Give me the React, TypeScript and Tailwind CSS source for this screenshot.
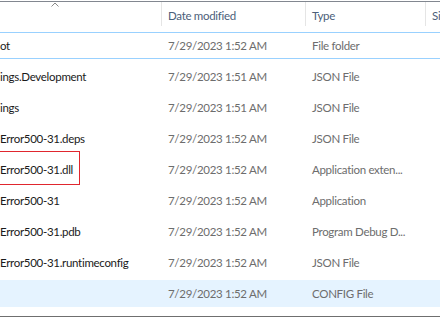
import React from "react";

type Row = { name: string; date: string; type: string; state?: "focus" | "hover" };

const rows: Row[] = [
  { name: "ot", date: "7/29/2023 1:52 AM", type: "File folder", state: "focus" },
  { name: "ings.Development", date: "7/29/2023 1:51 AM", type: "JSON File" },
  { name: "ings", date: "7/29/2023 1:51 AM", type: "JSON File" },
  { name: "Error500-31.deps", date: "7/29/2023 1:52 AM", type: "JSON File" },
  { name: "Error500-31.dll", date: "7/29/2023 1:52 AM", type: "Application exten..." },
  { name: "Error500-31", date: "7/29/2023 1:52 AM", type: "Application" },
  { name: "Error500-31.pdb", date: "7/29/2023 1:52 AM", type: "Program Debug D..." },
  { name: "Error500-31.runtimeconfig", date: "7/29/2023 1:52 AM", type: "JSON File" },
  { name: "", date: "7/29/2023 1:52 AM", type: "CONFIG File", state: "hover" },
];

export default function App() {
  return (
    <div
      className="relative w-[440px] h-[317px] overflow-hidden bg-white flex flex-col text-[11.5px] tracking-[-0.3px] leading-none"
      style={{ fontFamily: '"Segoe UI", Lato, sans-serif' }}
    >
      <div className="mt-px h-px bg-[#828790] shrink-0" />
      {/* header */}
      <div className="relative h-[30px] shrink-0 flex text-[#4c607a]">
        <div className="w-[161px] shrink-0 relative">
          <svg className="absolute left-[51px] top-0" width="8" height="5" viewBox="0 0 8 5">
            <path d="M0.5 4.5 L4 1 L7.5 4.5" fill="none" stroke="#8a8a8a" strokeWidth="1" />
          </svg>
        </div>
        <div className="w-px h-[24px] bg-[#e5e5e5] shrink-0" />
        <div className="w-[143px] shrink-0 pl-[6px] pt-[8px]">Date modified</div>
        <div className="w-px h-[24px] bg-[#e5e5e5] shrink-0" />
        <div className="w-[119px] shrink-0 pl-[6px] pt-[8px]">Type</div>
        <div className="w-px h-[24px] bg-[#e5e5e5] shrink-0" />
        <div className="flex-1 pl-[6px] pt-[8px] whitespace-nowrap overflow-hidden">Size</div>
      </div>
      {/* rows */}
      <div className="flex flex-col gap-[4px] shrink-0">
        {rows.map((r, i) => (
          <div
            key={i}
            className={
              "h-[27px] -mx-px pt-px flex items-center whitespace-nowrap " +
              (r.state === "focus"
                ? "border border-[#99d1ff]"
                : r.state === "hover"
                ? "bg-[#e5f3ff] border border-[#e5f3ff]"
                : "border border-transparent")
            }
          >
            <div className="w-[168px] shrink-0 text-[#1a1a1a] overflow-hidden">{r.name}</div>
            <div className="w-[144px] shrink-0 text-[#6d6d6d]">{r.date}</div>
            <div className="flex-1 text-[#6d6d6d]">{r.type}</div>
          </div>
        ))}
      </div>
      <div className="mt-auto h-px bg-[#6f6f6f] shrink-0" />
      {/* annotation box */}
      <div className="absolute left-[-2px] top-[151px] w-[82px] h-[34px] border border-[#e0262e]" />
    </div>
  );
}
